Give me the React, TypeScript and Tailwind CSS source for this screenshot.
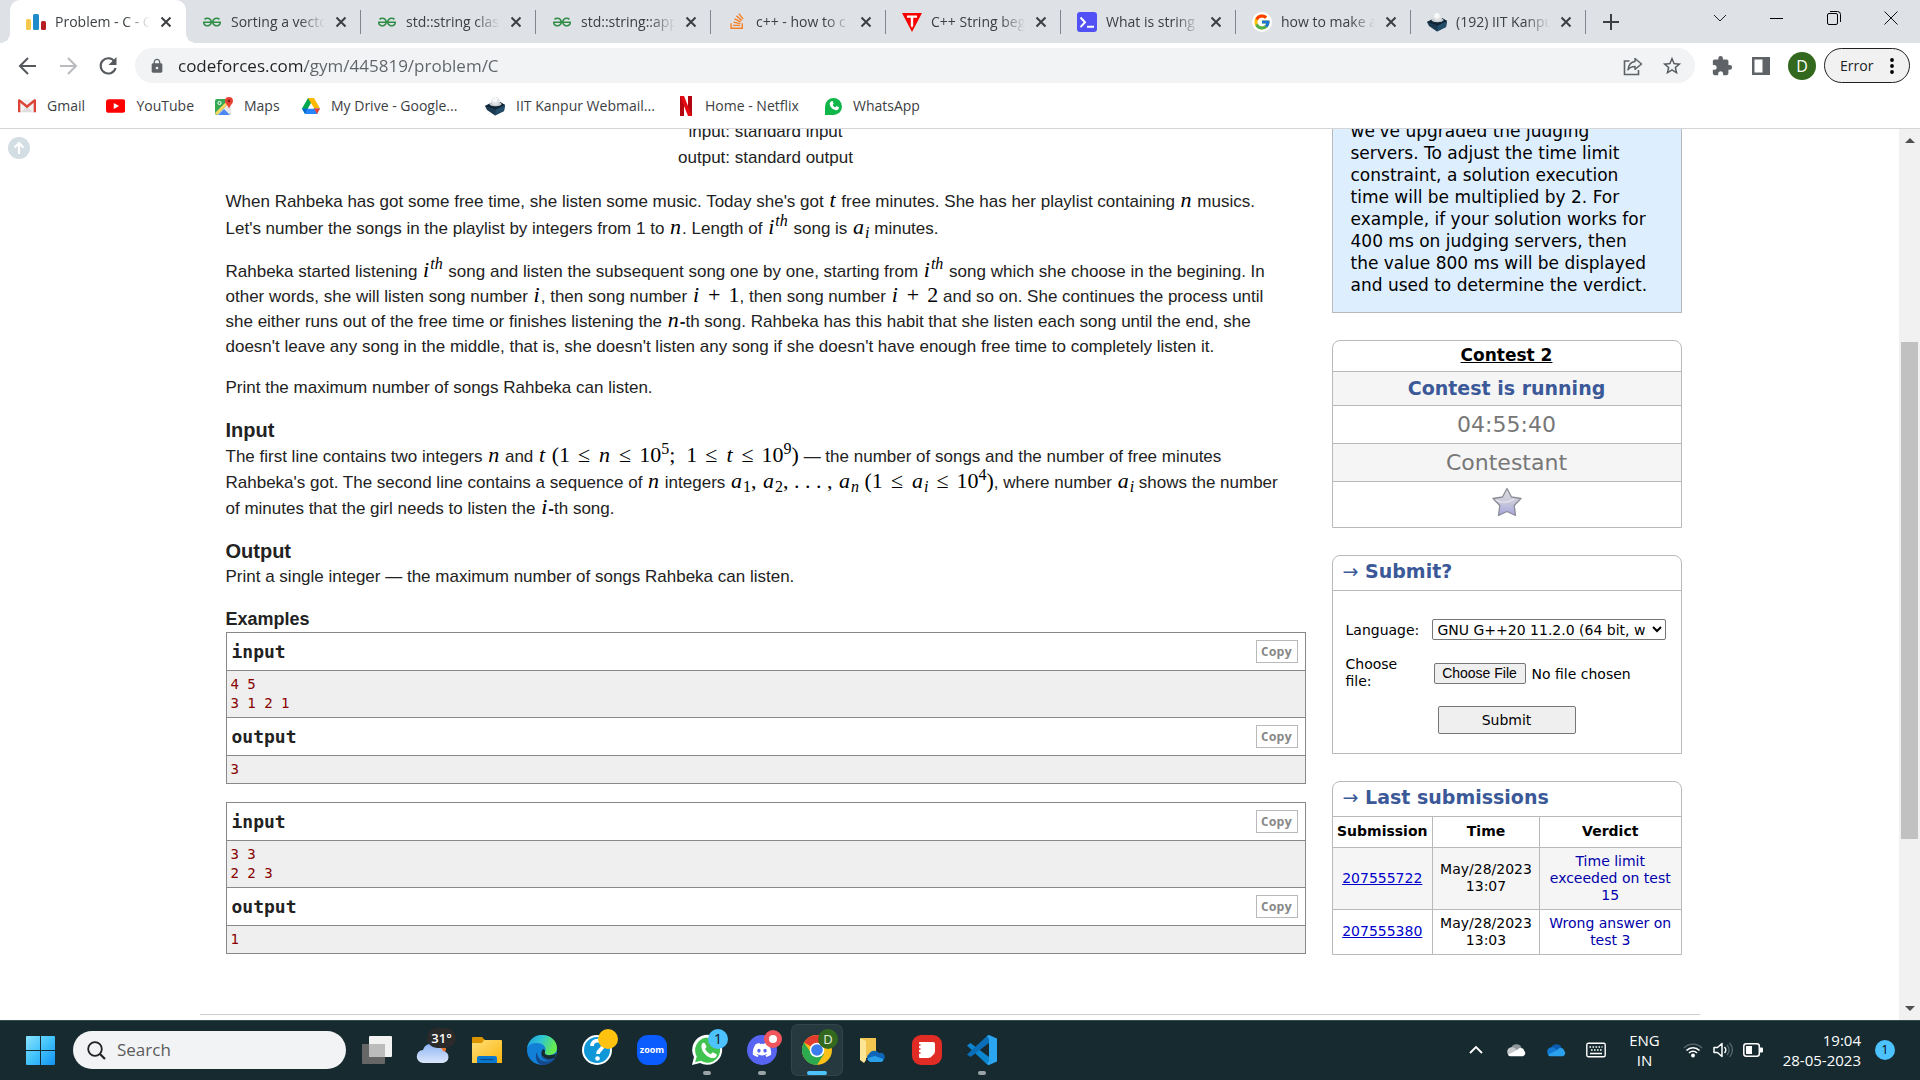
import React from "react";
import { FaStackOverflow, FaDiscord } from "react-icons/fa";
import { SiGeeksforgeeks } from "react-icons/si";
import { FcGoogle } from "react-icons/fc";
import { MdExtension, MdLock, MdStarBorder } from "react-icons/md";

/* ---------- small icons ---------- */

const CodeforcesIcon = () => (
  <svg viewBox="0 0 20 20" className="size-5">
    <rect x="0" y="7" width="5" height="11" rx="1.5" fill="#F5C84C" />
    <rect x="7" y="2" width="6" height="16" rx="1.5" fill="#1E8BCB" />
    <rect x="15" y="9" width="5" height="9" rx="1.5" fill="#B81D24" />
  </svg>
);
const GeeksIcon = () => <SiGeeksforgeeks className="size-[18px] text-[#2f8d46]" />;
const StackIcon = () => (
  <span className="flex size-5 justify-center">
    <FaStackOverflow className="size-[18px] text-[#f48024]" />
  </span>
);
const TutorialIcon = () => (
  <svg viewBox="0 0 20 20" className="size-5">
    <path d="M0 1h20L10 20Z" fill="#f80000" />
    <path d="M5 3.5h10v2.2h-3.8v8l-1.2 2-1.2-2v-8H5Z" fill="#fff" />
  </svg>
);
const ScalerIcon = () => (
  <svg viewBox="0 0 20 20" className="size-5">
    <rect width="20" height="20" rx="3" fill="#5151f5" />
    <path d="M3.5 5.5 8 10.3l-4.5 4.8M10 14.7h7" fill="none" stroke="#fff" strokeWidth="2" />
  </svg>
);
const GoogleIcon = () => (
  <span className="flex size-5 items-center justify-center rounded-full bg-white">
    <FcGoogle className="size-[18px]" />
  </span>
);
const MailCapIcon = () => (
  <svg viewBox="0 0 20 20" className="size-5">
    <path d="M0 10 6 7l9-1 5 3-1 6-9 4.500L2 14Z" fill="#1b3a52" />
    <path d="M0 10 6 7l9-1 5 3-9 4.500Z" fill="#0f2435" />
    <path d="M10 19.500 11 13.500 20 9l-1 6Z" fill="#234c69" />
    <path d="M4.500 8c0-3 12-3 12 0 0 3-12 3-12 0Z" fill="#c3c8cc" />
    <circle cx="10.500" cy="5" r="4.300" fill="#dfe2e4" />
    <circle cx="10" cy="3.800" r="2.700" fill="#f8f8f8" />
  </svg>
);
const GmailIcon = () => (
  <svg viewBox="0 0 20 16" className="h-4 w-[19px]">
    <rect x="1" y="1" width="18" height="14" fill="#f2f2f2" />
    <path d="M3 15 10 8.500l7 6.500Z" fill="#dedede" />
    <path d="M0 15V1.500C0 .5 1.500 0 2.300.7L10 7l7.700-6.300C18.500 0 20 .5 20 1.500V15h-2.600V4.500L10 10.500 2.600 4.500V15Z" fill="#db4437" />
  </svg>
);
const YouTubeIcon = () => (
  <svg viewBox="0 0 20 14" className="h-[14px] w-5">
    <rect width="20" height="14" rx="3" fill="#f00" />
    <path d="m8 4 5.500 3L8 10Z" fill="#fff" />
  </svg>
);
const MapsIcon = () => (
  <svg viewBox="0 0 18 18" className="size-[18px]">
    <rect x="0" y="2" width="16" height="16" rx="2" fill="#34a853" />
    <path d="M2 18 16 4v12a2 2 0 0 1-2 2Z" fill="#e8e8e8" />
    <path d="m3 18 6-6 6 6Z" fill="#4a89f3" />
    <path d="M0 16 14 2h2v2L2 18Z" fill="#fdd663" />
    <circle cx="4.500" cy="6" r="1.600" fill="none" stroke="#fff" />
    <path d="M14 0a4 4 0 0 1 4 4c0 3-3.500 4.500-4 8-.5-3.500-4-5-4-8a4 4 0 0 1 4-4Z" fill="#ea4335" />
    <circle cx="14" cy="4" r="1.400" fill="#8c1d12" />
  </svg>
);
const DriveIcon = () => (
  <svg viewBox="0 0 18 16" className="h-4 w-[18px]">
    <path d="M6 0h6l-3 5.200L3.100 16 0 10.600Z" fill="#00a74e" />
    <path d="M6 0h6l6 10.600h-6Z" fill="#ffba00" />
    <path d="M6.100 10.600H18L15 16H3.100Z" fill="#2684fc" />
    <path d="M12 10.600h6L15 16Z" fill="#ea4335" />
    <path d="M6 10.600H0L3.100 16Z" fill="#0066da" />
    <path d="M9 5.200 12 10.600H6Z" fill="#fff" />
  </svg>
);
const NetflixIcon = () => (
  <svg viewBox="0 0 12 20" className="mx-0.5 h-5 w-3">
    <path d="M0 0h4v20l-4 .1ZM8 0h4v20H8Z" fill="#b1060f" />
    <path d="M0 0h4l8 20H8Z" fill="#e50914" />
  </svg>
);
const WhatsAppSmall = () => (
  <span className="flex size-[17px] items-center justify-center rounded-full rounded-bl-xs bg-[#10b649]">
    <svg viewBox="0 0 12 12" className="size-3">
      <path d="M3 1.500 4.500 1l1.200 2.800-1 1.200c.6 1.200 1.300 1.800 2.500 2.400L8.400 6l2.600 1.300c0 2-1.500 3-3 2.900C4.500 9.500 2 7 1.700 4 1.700 2.800 2.200 2 3 1.500Z" fill="#fff" />
    </svg>
  </span>
);
const CloseGlyph = () => (
  <svg viewBox="0 0 12 12" className="size-3">
    <path d="m1.500 1.500 9 9m0-9-9 9" stroke="#3c4043" strokeWidth="2" />
  </svg>
);

/* ---------- browser chrome ---------- */

const tabs = [
  { title: "Problem - C - C", Icon: CodeforcesIcon },
  { title: "Sorting a vecto", Icon: GeeksIcon },
  { title: "std::string class", Icon: GeeksIcon },
  { title: "std::string::app", Icon: GeeksIcon },
  { title: "c++ - how to c", Icon: StackIcon },
  { title: "C++ String beg", Icon: TutorialIcon },
  { title: "What is string", Icon: ScalerIcon },
  { title: "how to make a", Icon: GoogleIcon },
  { title: "(192) IIT Kanpu", Icon: MailCapIcon },
];

function TabStrip() {
  return (
    <div className="flex h-[43px] shrink-0 items-stretch bg-[#dee1e6] pl-[10px]">
      {tabs.map(({ title, Icon }, i) => (
        <div
          key={i}
          className={
            i === 0
              ? "relative flex w-[176px] items-center rounded-t-[10px] bg-white pr-[14px] pl-4 before:absolute before:bottom-0 before:-left-[10px] before:size-[10px] before:bg-[radial-gradient(circle_at_0_0,transparent_10px,white_10px)] after:absolute after:-right-[10px] after:bottom-0 after:size-[10px] after:bg-[radial-gradient(circle_at_100%_0,transparent_10px,white_10px)]"
              : "relative flex w-[175px] items-center pr-[14px] pl-4 after:absolute after:right-0 after:h-6 after:w-px after:bg-[#80868b]"
          }
        >
          <span className="flex w-5 shrink-0 items-center justify-center">
            <Icon />
          </span>
          <button className="ml-[9px] min-w-0 flex-1 overflow-hidden text-left text-sm whitespace-nowrap text-[#3c4043] [mask-image:linear-gradient(to_right,black_72%,transparent_98%)]">
            {title}
          </button>
          <button aria-label={"Close " + title} className="ml-2 shrink-0">
            <CloseGlyph />
          </button>
        </div>
      ))}
      <button aria-label="New tab" className="ml-[17px] self-center">
        <svg viewBox="0 0 16 16" className="size-4">
          <path d="M8 0v16M0 8h16" stroke="#3c4043" strokeWidth="2" />
        </svg>
      </button>
      <div className="ml-auto flex h-9 items-center">
        <button aria-label="Search tabs" className="flex w-[57px] justify-center">
          <svg viewBox="0 0 14 8" className="h-2 w-[14px]">
            <path d="m1 1 6 6 6-6" fill="none" stroke="#222" />
          </svg>
        </button>
        <button aria-label="Minimize" className="flex w-[57px] justify-center">
          <span className="h-px w-[13px] bg-black" />
        </button>
        <button aria-label="Restore" className="flex w-[57px] justify-center">
          <svg viewBox="0 0 14 14" className="size-[14px]">
            <rect x=".5" y="2.500" width="10" height="11" rx="1.500" fill="none" stroke="#000" />
            <path d="M3 .5h7.500a3 3 0 0 1 3 3V11" fill="none" stroke="#000" />
          </svg>
        </button>
        <button aria-label="Close window" className="flex w-[58px] justify-center">
          <svg viewBox="0 0 14 14" className="size-[14px]">
            <path d="m.5.5 13 13m0-13-13 13" stroke="#111" />
          </svg>
        </button>
      </div>
    </div>
  );
}

function Toolbar() {
  return (
    <div className="flex h-[45px] shrink-0 items-center bg-white pr-[10px] pl-[18px]">
      <button aria-label="Back">
        <svg viewBox="0 0 20 20" className="size-5">
          <path d="M18 10H2.500M10 2l-8 8 8 8" fill="none" stroke="#55595e" strokeWidth="2" />
        </svg>
      </button>
      <button aria-label="Forward" className="ml-5">
        <svg viewBox="0 0 20 20" className="size-5">
          <path d="M2 10h15.500M10 2l8 8-8 8" fill="none" stroke="#b9bbbe" strokeWidth="2" />
        </svg>
      </button>
      <button aria-label="Reload" className="ml-5">
        <svg viewBox="0 0 20 20" className="size-5">
          <path d="M16.500 5.500A7.600 7.600 0 1 0 17.600 12" fill="none" stroke="#55595e" strokeWidth="2.100" />
          <path d="M18.500 1v8h-8Z" fill="#55595e" />
        </svg>
      </button>
      <div className="ml-[17px] flex h-[35px] flex-1 items-center rounded-full bg-[#f1f3f4] pr-3 pl-[14px]">
        <MdLock className="size-4 text-[#5f6368]" />
        <input
          aria-label="Address"
          className="ml-[13px] min-w-0 flex-1 bg-[linear-gradient(to_right,#202124_127px,#5f6368_127px)] bg-clip-text text-[17px] text-transparent"
          defaultValue="codeforces.com/gym/445819/problem/C"
        />
        <button aria-label="Share">
          <svg viewBox="0 0 20 20" className="size-5">
            <path d="M6.500 5H1.500v13.500h14V14" fill="none" stroke="#5f6368" strokeWidth="1.600" />
            <path d="M12 2.500 18.500 8 12 13.300V10.500c-3.500 0-5.500 1-7 3.300C5.500 9.500 7.500 6 12 5.500Z" fill="none" stroke="#5f6368" strokeWidth="1.500" strokeLinejoin="round" />
          </svg>
        </button>
        <button aria-label="Bookmark" className="ml-[18px]">
          <MdStarBorder className="size-[22px] text-[#55595e]" />
        </button>
      </div>
      <button aria-label="Extensions" className="ml-4">
        <MdExtension className="size-[22px] text-[#5f6368]" />
      </button>
      <button aria-label="Side panel" className="ml-[19px]">
        <svg viewBox="0 0 18 18" className="size-[18px]">
          <path d="M0 0h18v18H0ZM2.500 2.500v13h8v-13Z" fill="#5f6368" fillRule="evenodd" />
        </svg>
      </button>
      <button className="ml-[18px] flex size-7 items-center justify-center rounded-full bg-[#33691e] text-base text-white">
        D
      </button>
      <button className="ml-2 flex h-[35px] w-[86px] items-center justify-between rounded-full border border-[#202124] bg-[#f1f1f1] px-[15px] text-sm text-[#202124]">
        Error
        <svg viewBox="0 0 4 16" className="h-4 w-1">
          <circle cx="2" cy="2" r="1.900" />
          <circle cx="2" cy="8" r="1.900" />
          <circle cx="2" cy="14" r="1.900" />
        </svg>
      </button>
    </div>
  );
}

const bookmarks = [
  { label: "Gmail", Icon: GmailIcon, w: "w-[67px]" },
  { label: "YouTube", Icon: YouTubeIcon, w: "w-[88px]" },
  { label: "Maps", Icon: MapsIcon, w: "w-[66px]" },
  { label: "My Drive - Google...", Icon: DriveIcon, w: "w-[162px]" },
  { label: "IIT Kanpur Webmail...", Icon: MailCapIcon, w: "w-[172px]" },
  { label: "Home - Netflix", Icon: NetflixIcon, w: "w-[126px]" },
  { label: "WhatsApp", Icon: WhatsAppSmall, w: "w-[100px]" },
];

function Bookmarks() {
  return (
    <nav className="flex h-[41px] shrink-0 items-center gap-[21px] border-b border-[#d5d5d8] bg-white pb-1 pl-[18px]">
      {bookmarks.map(({ label, Icon, w }) => (
        <a key={label} href="#" className={"flex items-center gap-[11px] text-sm whitespace-nowrap text-[#3c4043] " + w}>
          <Icon />
          {label}
        </a>
      ))}
    </nav>
  );
}

/* ---------- problem statement ---------- */

const M = ({ children }: { children: React.ReactNode }) => (
  <span className="font-['Liberation_Serif',serif] text-[22px] leading-none text-black">{children}</span>
);
const V = ({ children }: { children: React.ReactNode }) => <i className="px-px">{children}</i>;
const Sup = ({ children }: { children: React.ReactNode }) => <sup className="text-base">{children}</sup>;
const Sub = ({ children }: { children: React.ReactNode }) => <sub className="text-base">{children}</sub>;
const Op = ({ children }: { children: React.ReactNode }) => <span className="px-2">{children}</span>;

const Ith = () => (
  <M>
    <V>i</V>
    <Sup>
      <i className="pr-px">th</i>
    </Sup>
  </M>
);
const Ai = () => (
  <M>
    <V>a</V>
    <Sub>
      <i>i</i>
    </Sub>
  </M>
);

function SampleBlock({ title, text }: { title: string; text: string }) {
  return (
    <>
      <div className="flex h-[38px] items-center justify-between border-b border-[#888] pr-[7px] pl-[5px]">
        <span className="font-['DejaVu_Sans_Mono',monospace] text-lg font-bold text-[#222]">{title}</span>
        <button className="flex h-[23px] w-[42px] items-center justify-center border border-[#b9b9b9] font-['DejaVu_Sans_Mono',monospace] text-[13px] font-bold text-[#888]">
          Copy
        </button>
      </div>
      <pre className="bg-[#efefef] px-1 py-1 font-['DejaVu_Sans_Mono',monospace] text-sm leading-[19px] text-[#880000]">
        {text}
      </pre>
    </>
  );
}

function Sample({ input, output }: { input: string; output: string }) {
  return (
    <div className="mb-[18px] border border-[#888]">
      <SampleBlock title="input" text={input} />
      <div className="border-t border-[#888]" />
      <SampleBlock title="output" text={output} />
    </div>
  );
}

function Statement() {
  return (
    <article className="w-[1080px] min-w-0 font-['Liberation_Sans',sans-serif] text-[17px] leading-[25px] text-[#222] *:whitespace-nowrap">
      <div className="mb-[17px] text-center leading-[26px]">
        input: standard input
        <br />
        output: standard output
      </div>
      <p className="mb-[17px] leading-[27px]">
        When Rahbeka has got some free time, she listen some music. Today she's got <M><V>t</V></M> free minutes. She has her
        playlist containing <M><V>n</V></M> musics.
        <br />
        Let's number the songs in the playlist by integers from 1 to <M><V>n</V></M>. Length of <Ith /> song is <Ai /> minutes.
      </p>
      <p className="mb-4">
        Rahbeka started listening <Ith /> song and listen the subsequent song one by one, starting from <Ith /> song which
        she choose in the begining. In
        <br />
        other words, she will listen song number <M><V>i</V></M>, then song number{" "}
        <M><V>i</V><Op>+</Op>1</M>, then song number <M><V>i</V><Op>+</Op>2</M> and so on. She continues the process until
        <br />
        she either runs out of the free time or finishes listening the <M><V>n</V></M><b>-</b>th song. Rahbeka has this habit
        that she listen each song until the end, she
        <br />
        doesn't leave any song in the middle, that is, she doesn't listen any song if she doesn't have enough free time to
        completely listen it.
      </p>
      <p className="mb-4">Print the maximum number of songs Rahbeka can listen.</p>
      <h2 className="text-xl leading-7 font-bold">Input</h2>
      <p className="mb-[17px] leading-[26px]">
        The first line contains two integers <M><V>n</V></M> and{" "}
        <M>
          <V>t</V> (1<Op>≤</Op><V>n</V><Op>≤</Op>10<Sup>5</Sup>; &nbsp;1<Op>≤</Op><V>t</V><Op>≤</Op>10<Sup>9</Sup>)
        </M>{" "}
        — the number of songs and the number of free minutes
        <br />
        Rahbeka's got. The second line contains a sequence of <M><V>n</V></M> integers{" "}
        <M>
          <V>a</V><Sub>1</Sub>, <V>a</V><Sub>2</Sub>, . . . , <V>a</V><Sub><i>n</i></Sub> (1<Op>≤</Op><V>a</V><Sub><i>i</i></Sub>
          <Op>≤</Op>10<Sup>4</Sup>)
        </M>
        , where number <Ai /> shows the number
        <br />
        of minutes that the girl needs to listen the <M><V>i</V></M><b>-</b>th song.
      </p>
      <h2 className="text-xl leading-[25px] font-bold">Output</h2>
      <p className="mb-[17px]">Print a single integer — the maximum number of songs Rahbeka can listen.</p>
      <h3 className="text-lg leading-[26px] font-bold">Examples</h3>
      <Sample input={"4 5\n3 1 2 1"} output="3" />
      <Sample input={"3 3\n2 2 3"} output="1" />
    </article>
  );
}

/* ---------- sidebar ---------- */

const StarBadge = () => (
  <svg viewBox="0 0 30 30" className="size-[30px]">
    <defs>
      <linearGradient id="starFill" x1="0" y1="0" x2="0" y2="1">
        <stop offset="0" stopColor="#dcdce2" />
        <stop offset=".5" stopColor="#c9c9da" />
        <stop offset="1" stopColor="#a5a5e0" />
      </linearGradient>
    </defs>
    <path d="m15 1.500 4.500 8.500 9.500 1.500-6.800 7L23.500 28.500 15 24.500 6.500 28.500l1.300-10L1 11.500 10.500 10Z" fill="url(#starFill)" stroke="#8c8c96" strokeWidth="1.300" strokeLinejoin="round" />
    <path d="M4 13c6 4 14 2 18-1" fill="none" stroke="#e6e6f0" strokeWidth="1.200" />
  </svg>
);

const Caption = ({ children }: { children: React.ReactNode }) => (
  <h2 className="border-b border-[#b9b9b9] px-[10px] pb-1 text-[19px] leading-[30px] font-bold text-[#3b5998]">
    <span className="font-normal">→</span> {children}
  </h2>
);

const submissions = [
  { id: "207555722", date: "May/28/2023", time: "13:07", verdict: "Time limit exceeded on test 15", row: "bg-[#f5f5f5] h-[62px]" },
  { id: "207555380", date: "May/28/2023", time: "13:03", verdict: "Wrong answer on test 3", row: "h-[45px]" },
];

function Sidebar() {
  return (
    <aside className="w-[350px] shrink-0 pt-px font-['DejaVu_Sans',sans-serif] text-sm text-black">
      <div className="border border-t-0 border-[#b9b9b9] bg-[#ddeeff] px-[18px] pb-4 text-[17px] leading-[22px] whitespace-nowrap">
        we've upgraded the judging
        <br />
        servers. To adjust the time limit
        <br />
        constraint, a solution execution
        <br />
        time will be multiplied by 2. For
        <br />
        example, if your solution works for
        <br />
        400 ms on judging servers, then
        <br />
        the value 800 ms will be displayed
        <br />
        and used to determine the verdict.
      </div>

      <div className="mt-[27px] divide-y divide-[#b9b9b9] rounded-t-lg border border-[#b9b9b9] text-center">
        <div className="h-[31px] text-[17px] leading-[29px] font-bold">
          <a href="#" className="underline">Contest 2</a>
        </div>
        <div className="h-[34px] bg-[#f5f5f5] text-[19px] leading-[33px] font-bold text-[#3b5998]">Contest is running</div>
        <div className="h-[38px] text-[22px] leading-[38px] text-[#777]">04:55:40</div>
        <div className="h-[38px] bg-[#f5f5f5] text-[22px] leading-[38px] text-[#777]">Contestant</div>
        <div className="flex h-[45px] justify-center pt-[5px]">
          <StarBadge />
        </div>
      </div>

      <form className="mt-[27px] rounded-t-lg border border-[#b9b9b9]" onSubmit={(e) => e.preventDefault()}>
        <Caption>Submit?</Caption>
        <div className="grid grid-cols-[86px_1fr] items-center gap-y-4 px-[13px] pt-7 pb-[19px]">
          <label htmlFor="language">Language:</label>
          <select id="language" className="h-[21px] w-[234px] rounded-xs border border-[#767676] bg-white pr-1 pl-px">
            <option>GNU G++20 11.2.0 (64 bit, winlibs)</option>
          </select>
          <label htmlFor="source" className="w-16 leading-[17px]">Choose file:</label>
          <input
            id="source"
            type="file"
            className="w-[236px] pl-[2px] file:mr-1.5 file:h-[21px] file:w-[92px] file:rounded-xs file:border file:border-solid file:border-[#767676] file:bg-[#efefef] file:font-['Liberation_Sans',sans-serif] file:text-sm file:leading-none"
          />
          <button className="col-span-2 h-7 w-[138px] justify-self-center rounded-xs border border-[#767676] bg-[#efefef]">
            Submit
          </button>
        </div>
      </form>

      <section className="mt-[27px] rounded-t-lg border border-[#b9b9b9]">
        <Caption>Last submissions</Caption>
        <table className="w-full table-fixed border-collapse text-center leading-[17px]">
          <thead>
            <tr className="h-[30px]">
              <th className="w-[100px] border-r border-[#b9b9b9] font-bold">Submission</th>
              <th className="w-[107px] border-r border-[#b9b9b9] font-bold">Time</th>
              <th className="font-bold">Verdict</th>
            </tr>
          </thead>
          <tbody>
            {submissions.map((s) => (
              <tr key={s.id} className={"border-t border-[#b9b9b9] " + s.row}>
                <td className="border-r border-[#b9b9b9]">
                  <a href="#" className="text-[#0000cc] underline">{s.id}</a>
                </td>
                <td className="border-r border-[#b9b9b9]">
                  {s.date}
                  <br />
                  {s.time}
                </td>
                <td className="px-2 text-[#0000aa]">{s.verdict}</td>
              </tr>
            ))}
          </tbody>
        </table>
      </section>
    </aside>
  );
}

function Scrollbar() {
  return (
    <div className="flex w-[21px] shrink-0 flex-col items-center bg-[#f1f1f1]">
      <svg viewBox="0 0 21 21" className="size-[21px] shrink-0">
        <path d="m6 14 5-5 5 5Z" fill="#505050" />
      </svg>
      <div className="grow-[192]" />
      <div className="w-[17px] grow-[497] bg-[#c1c1c1]" />
      <div className="grow-[160]" />
      <svg viewBox="0 0 21 21" className="size-[21px] shrink-0">
        <path d="m6 7 5 5 5-5Z" fill="#505050" />
      </svg>
    </div>
  );
}

/* ---------- taskbar ---------- */

const WindowsIcon = () => (
  <svg viewBox="0 0 29 29" className="size-[29px]">
    <defs>
      <linearGradient id="win" x1="0" y1="0" x2="1" y2="1">
        <stop offset="0" stopColor="#8ae3ff" />
        <stop offset=".5" stopColor="#41c2fb" />
        <stop offset="1" stopColor="#1292f2" />
      </linearGradient>
    </defs>
    <path d="M0 1a1 1 0 0 1 1-1h13v14H0ZM15 0h13a1 1 0 0 1 1 1v13H15ZM0 15h14v14H1a1 1 0 0 1-1-1ZM15 15h14v13a1 1 0 0 1-1 1H15Z" fill="url(#win)" />
  </svg>
);
const TaskViewIcon = () => (
  <svg viewBox="0 0 30 30" className="size-[30px]">
    <rect x="0" y="9" width="23" height="20" rx="1" fill="#666" />
    <rect x="7" y="1" width="23" height="21" rx="1" fill="#f2f2f2" />
    <path d="M7 9h16v13H7Z" fill="#bcbcbc" />
  </svg>
);
const WeatherIcon = () => (
  <svg viewBox="0 0 40 36" className="h-9 w-10">
    <defs>
      <linearGradient id="cloud" x1="0" y1="0" x2="0" y2="1">
        <stop offset="0" stopColor="#8db4f5" />
        <stop offset="1" stopColor="#dbe7fb" />
      </linearGradient>
    </defs>
    <circle cx="24" cy="21" r="6" fill="#e8742c" />
    <path d="M7.500 35a6.500 6.500 0 0 1-.5-13 9 9 0 0 1 16-2.500 5 5 0 0 1 4 3.500 6 6 0 0 1-1 12Z" fill="url(#cloud)" />
    <rect x="11" y="0" width="29" height="20" rx="10" fill="#2b2b2b" />
    <text x="25.500" y="15" textAnchor="middle" fontSize="13" fontWeight="600" fill="#fff" fontFamily="Open Sans">31°</text>
  </svg>
);
const ExplorerIcon = () => (
  <svg viewBox="0 0 30 30" className="size-[30px]">
    <defs>
      <linearGradient id="folder" x1="0" y1="0" x2="1" y2="1">
        <stop offset="0" stopColor="#ffe07a" />
        <stop offset="1" stopColor="#fbb50c" />
      </linearGradient>
    </defs>
    <path d="M0 3a1 1 0 0 1 1-1h9l3 3v4H0Z" fill="#dc9300" />
    <path d="M0 8h10l2-3h17a1 1 0 0 1 1 1v22H0Z" fill="url(#folder)" />
    <path d="M5 28v-5a2 2 0 0 1 2-2h16a2 2 0 0 1 2 2v5Z" fill="#0b78d0" />
    <path d="M8.500 24.500h13" stroke="#094a86" strokeWidth="1.200" />
  </svg>
);
const EdgeIcon = () => (
  <svg viewBox="0 0 30 30" className="size-[30px]">
    <defs>
      <linearGradient id="edgeTop" x1="0" y1="0" x2="1" y2=".3">
        <stop offset="0" stopColor="#1c9be0" />
        <stop offset=".5" stopColor="#2fc6d0" />
        <stop offset="1" stopColor="#66eb50" />
      </linearGradient>
    </defs>
    <circle cx="15" cy="15" r="15" fill="#1380d8" />
    <path d="M10 17c0 8 8 12 17 7.500A15 15 0 0 1 15 30C8 28 8 20 10 17Z" fill="#134a8e" />
    <path d="M0 14C1 6 7 0 15 0c9 0 15 6 15 13 0 5-4 7-8 7-3 0-5-1-4-3 2-5-2-9-8-9S1 10 0 14Z" fill="url(#edgeTop)" />
    <path d="M18 17c-1 2 1 3.300 4 3.300 3.500 0 6-1 7.300-2.300-.5 2.300-1.200 4-2.300 6-5 2-10 1-12-2.500-1.300-3-.5-6 1-7.500 1.500.5 2.300 1.700 2 3Z" fill="#162a30" />
    <path d="M15 21.500c2 3.500 7 4.500 12 2.500" fill="none" stroke="#1856a0" strokeWidth="2" />
  </svg>
);
const HelpIcon = () => (
  <svg viewBox="0 0 36 36" className="size-9">
    <circle cx="15" cy="21" r="15" fill="#fff" />
    <circle cx="15" cy="21" r="13" fill="#0f97d8" />
    <path d="M10 17c0-7 11-7 11-.5 0 4-5 4-5 8.500" fill="none" stroke="#fff" strokeWidth="3.800" />
    <circle cx="15.500" cy="29.500" r="2.300" fill="#fff" />
    <circle cx="26" cy="10" r="10" fill="#ffc20e" />
  </svg>
);
const ZoomIcon = () => (
  <span className="flex size-[30px] items-center justify-center rounded-[11px] bg-[#0b5cff] pb-px text-[9px] font-bold text-white">
    zoom
  </span>
);
const WhatsAppIcon = () => (
  <svg viewBox="0 0 36 36" className="size-9">
    <path d="M0 36 2 28A15 15 0 1 1 8 34Z" fill="#fff" />
    <path d="M3 33.300 4.800 27.500A12.500 12.500 0 1 1 9 31.800Z" fill="#41c352" />
    <path d="M10 14.500c1-1 2.500-1 3 0l1.500 3c.3 1-1.500 2-1.300 2.600 1 2.400 3 4 5.300 5 .8.300 1.800-2 2.700-1.700l3 1.500c1 .6.5 2-.3 3-5 4.500-17-5-13.900-13.400Z" fill="#fff" />
    <circle cx="26" cy="10" r="10" fill="#4cc2ff" />
    <text x="26" y="15" textAnchor="middle" fontSize="14" fill="#111" fontFamily="Open Sans">1</text>
  </svg>
);
const DiscordIcon = () => (
  <span className="relative flex size-[30px] items-center justify-center rounded-full bg-[#5865f2]">
    <FaDiscord className="size-5 text-white" />
    <span className="absolute -top-[5px] -right-[5px] size-[18px] rounded-full border-[5px] border-[#f0565c] bg-white" />
  </span>
);
const ChromeIcon = () => (
  <svg viewBox="0 0 36 36" className="size-9">
    <circle cx="15" cy="21" r="15" fill="#fbc116" />
    <path d="M15 21 2 13.500a15 15 0 0 1 26 0Z" fill="#e33b2e" />
    <path d="M2 13.500A15 15 0 0 0 15 36l7-11-7-4-6.500 2Z" fill="#2da94f" />
    <circle cx="15" cy="21" r="7.300" fill="#fff" />
    <circle cx="15" cy="21" r="5.800" fill="#3b7ded" />
    <circle cx="26" cy="10" r="10" fill="#33691e" />
    <text x="26" y="15" textAnchor="middle" fontSize="13" fill="#e4ecdf" fontFamily="Open Sans">D</text>
  </svg>
);
const FolderCloudIcon = () => (
  <svg viewBox="0 0 26 30" className="h-[30px] w-[26px]">
    <path d="M2 3h15v20H2Z" fill="#f3c64f" />
    <path d="M1 3 7 6v19l-2 3-4-3Z" fill="#ffe596" />
    <path d="M10 26a4 4 0 0 1 0-7 6 6 0 0 1 10-1 4.200 4.200 0 0 1 3 8Z" fill="#0f66b8" />
    <path d="M10 26c-2-1-2-3 2-4l4-1 8 3c1 2-1 3-2 3H11Z" fill="#2aa0e8" />
  </svg>
);
const NotesIcon = () => (
  <svg viewBox="0 0 30 30" className="size-[30px]">
    <rect width="30" height="30" rx="9" fill="#e02c24" />
    <path d="M8 7h13a2 2 0 0 1 2 2v8l-6 6H8a1 1 0 0 1-1-1V8a1 1 0 0 1 1-1Z" fill="#fff" />
    <path d="M23 18h-4a1 1 0 0 0-1 1v4Z" fill="#fff" />
    <path d="M5.500 10h3M5.500 14h3M5.500 18h3" stroke="#e02c24" strokeWidth="1.500" />
  </svg>
);
const VSCodeIcon = () => (
  <svg viewBox="0 0 30 30" className="size-[30px]">
    <path d="M22 22 3.500 8 0 10.500l19 18 3 1.500Z" fill="#0d86d0" />
    <path d="M22 8 3.500 22 0 19.500 20 1l2-1Z" fill="#0a6fb8" />
    <path d="M22 0 30 3.500v23L22 30c-1 0-1.500-.5-2-1l2-3V4l-2-3Z" fill="#2ca5f0" />
  </svg>
);

const apps: { name: string; Icon: () => React.ReactElement; mark?: string; cell?: string }[] = [
  { name: "Task view", Icon: TaskViewIcon },
  { name: "Weather", Icon: WeatherIcon, cell: "pb-2 pl-2" },
  { name: "File Explorer", Icon: ExplorerIcon },
  { name: "Edge", Icon: EdgeIcon },
  { name: "Help", Icon: HelpIcon, cell: "pb-1.5 pl-1.5" },
  { name: "Zoom", Icon: ZoomIcon },
  { name: "WhatsApp", Icon: WhatsAppIcon, mark: "w-2 bg-[#9aa3a6]", cell: "pb-1.5 pl-1.5" },
  { name: "Discord", Icon: DiscordIcon, mark: "w-2 bg-[#9aa3a6]" },
  { name: "Chrome", Icon: ChromeIcon, mark: "w-5 bg-[#4cc2ff]", cell: "pb-1.5 pl-1.5 bg-[#26393f] ring-1 ring-[#32454b]" },
  { name: "OneDrive folder", Icon: FolderCloudIcon },
  { name: "Notes", Icon: NotesIcon },
  { name: "Visual Studio Code", Icon: VSCodeIcon, mark: "w-2 bg-[#9aa3a6]" },
];

const Cloud = ({ back, mid, front }: { back: string; mid: string; front: string }) => (
  <svg viewBox="0 0 20 14" className="h-[14px] w-5">
    <path d="M5 6a5.500 5.500 0 0 1 10.500-1.500L12 8Z" fill={back} />
    <path d="M4.500 13A4.400 4.400 0 0 1 4.500 4.500c2-.5 3.500.2 5 1.200L15 9Z" fill={mid} />
    <path d="M4 13.200a2.500 2.500 0 0 1-2-1.500L12 6.500c1-2 5.500-2 6 1a3.300 3.300 0 0 1-1 5.700Z" fill={front} />
  </svg>
);

function Taskbar() {
  return (
    <footer className="flex h-[60px] shrink-0 items-center border-t border-[#3b4c51] bg-[#162a30] pr-[25px] pb-px pl-[26px]">
      <button aria-label="Start">
        <WindowsIcon />
      </button>
      <label className="ml-[18px] flex h-[38px] w-[273px] items-center rounded-full bg-[#f1f3f5] pl-[14px]">
        <svg viewBox="0 0 19 19" className="size-[19px]">
          <circle cx="8" cy="8" r="6.800" fill="none" stroke="#222" strokeWidth="1.800" />
          <path d="m13 13 5 5" stroke="#222" strokeWidth="2.200" />
        </svg>
        <input
          aria-label="Search"
          placeholder="Search"
          className="ml-[11px] w-40 bg-transparent text-[17px] placeholder:text-[#5c5c5c]"
        />
      </label>
      <div className="ml-[6px] flex gap-[5px]">
        {apps.map(({ name, Icon, mark, cell }) => (
          <button
            key={name}
            aria-label={name}
            className={"relative flex size-[50px] items-center justify-center rounded-md " + (cell ?? "")}
          >
            <Icon />
            {mark && <span className={"absolute bottom-0 left-1/2 h-1 -translate-x-1/2 rounded-full " + mark} />}
          </button>
        ))}
      </div>
      <div className="ml-auto flex items-center text-white">
        <svg viewBox="0 0 14 8" className="h-2 w-[14px]">
          <path d="m1 7 6-6 6 6" fill="none" stroke="#fff" strokeWidth="1.800" />
        </svg>
        <span className="ml-[23px]">
          <Cloud back="#8f9699" mid="#c5c9cb" front="#fff" />
        </span>
        <span className="ml-5">
          <Cloud back="#0a5cb0" mid="#1179d4" front="#2ba0ec" />
        </span>
        <svg viewBox="0 0 20 16" className="ml-5 h-4 w-5">
          <rect x=".8" y="1.300" width="18.400" height="13.400" rx="1.500" fill="none" stroke="#fff" strokeWidth="1.400" />
          <path d="M3.500 5h13M5 8h11" stroke="#fff" strokeWidth="1.600" strokeDasharray="1.600 1.400" />
          <path d="M4 11.500h12" stroke="#fff" strokeWidth="1.500" />
        </svg>
        <span className="ml-[23px] text-center text-[15px] leading-5">
          ENG
          <br />
          IN
        </span>
        <svg viewBox="0 0 20 16" className="ml-[23px] h-4 w-5">
          <path d="M1 6a12.500 12.500 0 0 1 18 0" fill="none" stroke="#5a696e" strokeWidth="1.400" />
          <path d="M3.500 8.500a9 9 0 0 1 13 0M6 11a5.600 5.600 0 0 1 8 0" fill="none" stroke="#fff" strokeWidth="1.600" />
          <circle cx="10" cy="13.500" r="1.900" fill="#fff" />
        </svg>
        <svg viewBox="0 0 20 18" className="ml-[10px] h-[18px] w-5">
          <path d="M1 6.500h3.500L9 2.500v13l-4.500-4H1Z" fill="none" stroke="#fff" strokeWidth="1.500" strokeLinejoin="round" />
          <path d="M11.500 6a4.500 4.500 0 0 1 0 6" fill="none" stroke="#fff" strokeWidth="1.400" />
          <path d="M14 4a7 7 0 0 1 0 10M16.500 2a10 10 0 0 1 0 14" fill="none" stroke="#5a696e" strokeWidth="1.300" />
        </svg>
        <svg viewBox="0 0 20 14" className="ml-[10px] h-[14px] w-5">
          <rect x=".8" y=".8" width="15.500" height="12.400" rx="2.500" fill="none" stroke="#fff" strokeWidth="1.500" />
          <rect x="3" y="3" width="6" height="8" fill="#fff" />
          <path d="M17 4.500h2a1 1 0 0 1 1 1v3a1 1 0 0 1-1 1h-2Z" fill="#fff" />
        </svg>
        <span className="ml-5 text-right text-[15px] leading-5">
          19:04
          <br />
          28-05-2023
        </span>
        <span className="ml-[14px] flex size-5 items-center justify-center rounded-full bg-[#4cc2ff] text-xs text-black">1</span>
      </div>
    </footer>
  );
}

export default function App() {
  return (
    <div className="flex h-screen flex-col overflow-hidden bg-white font-['Open_Sans',sans-serif]">
      <TabStrip />
      <Toolbar />
      <Bookmarks />
      <div className="relative flex min-h-0 flex-1">
        <button aria-label="Scroll to top" className="absolute top-2 left-2 flex size-[22px] items-center justify-center rounded-full bg-[#d3dde4]">
          <svg viewBox="0 0 14 14" className="size-[14px]">
            <path d="M7 13V2M2.500 6.500 7 2l4.500 4.500" fill="none" stroke="#fff" strokeWidth="2.200" />
          </svg>
        </button>
        <main className="min-w-0 flex-1 overflow-hidden">
          <div className="mx-auto -mt-[10px] w-full max-w-[1500px]">
            <div className="flex justify-between pr-[18px] pl-[26px]">
              <Statement />
              <Sidebar />
            </div>
            <div className="mt-[42px] border-t border-[#ccc]" />
          </div>
        </main>
        <Scrollbar />
      </div>
      <Taskbar />
    </div>
  );
}
